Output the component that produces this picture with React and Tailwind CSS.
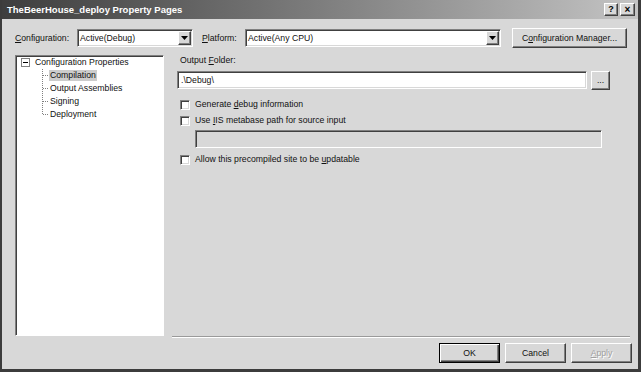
import React from "react";

const raised =
  "bg-[#d8d8d8] border border-t-white border-l-white border-b-[#404040] border-r-[#404040] shadow-[inset_-1px_-1px_0_#808080]";
const sunken =
  "border border-t-[#808080] border-l-[#808080] border-b-white border-r-white shadow-[inset_1px_1px_0_#404040,inset_-1px_-1px_0_#d8d8d8]";

function Arrow() {
  return (
    <div className={`${raised} w-[13px] h-[14px] mr-[1px] flex items-center justify-center`}>
      <svg width="7" height="4" viewBox="0 0 7 4">
        <path d="M0 0h7L3.5 4z" fill="#000" />
      </svg>
    </div>
  );
}

function Combo({ width, value }) {
  return (
    <div className={`${sunken} bg-white h-[18px] flex items-center justify-between ${width}`}>
      <span className="pl-[2px]">{value}</span>
      <Arrow />
    </div>
  );
}

function Check({ children, className = "" }) {
  return (
    <div className={`h-[13px] flex items-center gap-[5px] ml-[8px] ${className}`}>
      <div className={`${sunken} bg-white w-[10px] h-[10px]`} />
      <span>{children}</span>
    </div>
  );
}

function Tree() {
  const kids = ["Compilation", "Output Assemblies", "Signing", "Deployment"];
  return (
    <div className="ml-[13px] w-[149px] h-[281px] bg-white border border-t-[#808080] border-l-[#808080] border-b-white border-r-white shadow-[inset_1px_1px_0_#404040]">
      <div className="h-[13px] flex items-center">
        <div className="ml-[5px] w-[9px] h-[9px] border border-[#808080] flex items-center justify-center">
          <div className="w-[5px] h-px bg-black" />
        </div>
        <span className="ml-[5px]">Configuration Properties</span>
      </div>
      <div className="flex ml-[26px]">
        <svg width="7" height="52" viewBox="0 0 7 52" className="shrink-0">
          <g stroke="#808080" strokeWidth="1" strokeDasharray="1 1">
            <path d="M0.5 0V45.5" />
            <path d="M1 6.5H7M1 19.5H7M1 32.5H7M1 45.5H7" />
          </g>
        </svg>
        <div className="flex flex-col">
          {kids.map((k, i) => (
            <div key={k} className="h-[13px] flex items-center">
              <span className={`px-[1px] leading-[11px] ${i === 0 ? "bg-[#cccccc]" : ""}`}>{k}</span>
            </div>
          ))}
        </div>
      </div>
    </div>
  );
}

export default function App() {
  return (
    <div className="w-[641px] h-[372px] bg-[#d8d8d8] flex flex-col border-l-2 border-r-[3px] border-b-[3px] border-[#3c3c3c] overflow-hidden text-[8.7px] leading-[11px] text-[#111] font-['Liberation_Sans',Arial,sans-serif]">
      {/* title bar */}
      <div className="h-[19px] shrink-0 flex items-center justify-between pl-[5px] pr-[3px] bg-linear-to-r from-[#3e3e3e] to-[#c4c4c4]">
        <span className="text-white font-bold text-[9.5px]">TheBeerHouse_deploy Property Pages</span>
        <div className="flex gap-[2px]">
          <div className={`${raised} w-[14px] h-[13px] flex items-center justify-center font-bold text-[9px] text-black`}>?</div>
          <div className={`${raised} w-[15px] h-[13px] flex items-center justify-center font-bold text-[10px] text-black`}>×</div>
        </div>
      </div>

      {/* configuration row */}
      <div className="mt-[9px] h-[20px] flex items-center pl-[13px]">
        <span className="w-[62px]"><u>C</u>onfiguration:</span>
        <Combo width="w-[116px]" value="Active(Debug)" />
        <span className="ml-[9px] w-[43px]"><u>P</u>latform:</span>
        <Combo width="w-[256px]" value="Active(Any CPU)" />
        <div className={`${raised} ml-[11px] w-[115px] h-[20px] flex items-center justify-center`}>
          <span>C<u>o</u>nfiguration Manager...</span>
        </div>
      </div>

      {/* main */}
      <div className="mt-[7px] flex h-[283px]">
        <Tree />
        <div className="ml-[8px] w-[458px] h-[282px] border-b border-[#9a9a9a] shadow-[0_1px_0_#fff]">
          <div className="ml-[8px]">Output <u>F</u>older:</div>
          <div className="mt-[5px] ml-[5px] flex items-start">
            <div className={`${sunken} bg-white w-[410px] h-[18px] flex items-center pl-[3px]`}>.\Debug\</div>
            <div className={`${raised} ml-[4px] w-[19px] h-[19px] flex items-center justify-center`}>...</div>
          </div>
          <Check className="mt-[8px]">Generate <u>d</u>ebug information</Check>
          <Check className="mt-[3px]">Use <u>I</u>IS metabase path for source input</Check>
          <div className={`${sunken} bg-[#d8d8d8] mt-[3px] ml-[23px] w-[407px] h-[18px]`} />
          <Check className="mt-[5px]">Allow this precompiled site to be <u>u</u>pdatable</Check>
        </div>
      </div>

      {/* buttons */}
      <div className="mt-[5px] flex justify-end gap-[5px] pr-[6px]">
        <div className="w-[61px] h-[20px] border border-black shadow-[inset_1px_1px_0_#fff,inset_-1px_-1px_0_#404040,inset_-2px_-2px_0_#808080] flex items-center justify-center">OK</div>
        <div className={`${raised} w-[61px] h-[20px] flex items-center justify-center`}>Cancel</div>
        <div className={`${raised} w-[61px] h-[20px] flex items-center justify-center text-[#a0a0a0] [text-shadow:1px_1px_0_#fff]`}>
          <span><u>A</u>pply</span>
        </div>
      </div>
    </div>
  );
}
